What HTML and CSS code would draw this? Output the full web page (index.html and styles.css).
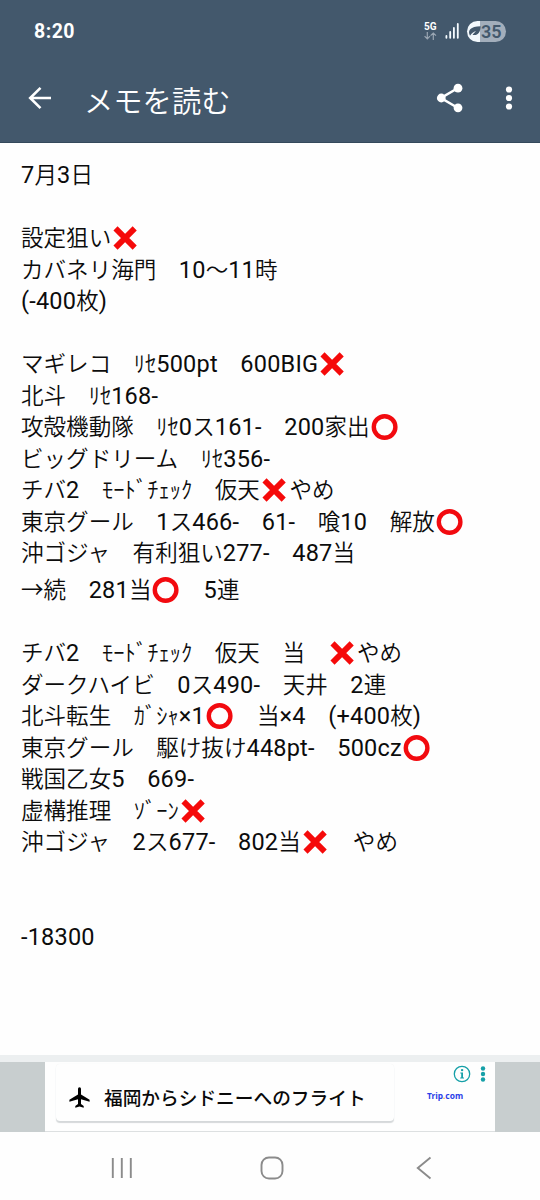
FILE: index.html
```html
<!DOCTYPE html>
<html lang="ja">
<head>
<meta charset="utf-8">
<title>メモを読む</title>
<link rel="stylesheet" href="styles.css">
</head>
<body>
<svg class="defs" width="0" height="0">
  <symbol id="cross" viewBox="0 0 28 26"><path d="M4.5 3.4 23.7 22.6M23.7 3.4 4.5 22.6" stroke="#f50a0a" stroke-width="5.8" fill="none"/></symbol>
  <symbol id="ring" viewBox="0 0 28 26"><circle cx="14.6" cy="13" r="10.8" stroke="#f20a0f" stroke-width="4.4" fill="none"/></symbol>
</svg>
<header class="top">
  <div class="status">
    <span class="clock">8:20</span>
    <div class="indicators">
      <div class="network"><span>5G</span>
        <svg width="13" height="8" viewBox="0 0 13 8"><path d="M3.3 0v6.8M.6 4.2l2.7 2.7L6 4.2M9.3 8V1M6.6 3.7 9.3 1 12 3.7" stroke="#9aa6b3" stroke-width="1.2" fill="none"/></svg>
      </div>
      <svg class="signal" width="15" height="16" viewBox="0 0 15 16"><path d="M1.4 13v1.8M5.2 9v5.8M8.9 5v9.8M12.8 1v13.8" stroke="#f5fbff" stroke-width="1.8" stroke-linecap="round"/></svg>
      <div class="battery">
        <svg width="13" height="12" viewBox="0 0 13 12"><path d="M1.5 9.6C0 5.5 2 1.5 12.6 1.2 12.5 7.5 9.5 11 4.5 9.8L8 6C5.5 7 3.8 8 2 10.8Z" fill="#43586c"/></svg><span>35</span>
      </div>
    </div>
  </div>
  <div class="appbar">
    <svg class="back" width="24" height="24" viewBox="0 0 24 24"><path d="M23 12H2.5M12.5 1.8 2.2 12l10.3 10.2" stroke="#fff" stroke-width="2.6" fill="none"/></svg>
    <h1>メモを読む</h1>
    <svg class="share" width="28" height="30" viewBox="0 0 28 30"><path d="M22 5 5 15l17 10" stroke="#fff" stroke-width="2.6" fill="none"/><g fill="#fff"><circle cx="22" cy="5.2" r="4.4"/><circle cx="5.3" cy="15" r="4.4"/><circle cx="22" cy="24.8" r="4.4"/></g></svg>
    <svg class="more" width="8" height="24" viewBox="0 0 8 24" fill="#fff"><circle cx="4" cy="3.5" r="3.1"/><circle cx="4" cy="12" r="3.1"/><circle cx="4" cy="20.5" r="3.1"/></svg>
  </div>
</header>
<main class="memo">
  <p><b>7</b>月<b>3</b>日</p>
  <p></p>
  <p>設定狙い<svg class="mark"><use href="#cross"/></svg></p>
  <p>カバネリ海門　<b>10</b>～<b>11</b>時</p>
  <p><b>(-400</b>枚<b>)</b></p>
  <p></p>
  <p>マギレコ　ﾘｾ<b>500pt</b>　<b>600BIG</b><svg class="mark"><use href="#cross"/></svg></p>
  <p>北斗　ﾘｾ<b>168-</b></p>
  <p>攻殻機動隊　ﾘｾ<b>0</b>ス<b>161-</b>　<b>200</b>家出<svg class="mark"><use href="#ring"/></svg></p>
  <p>ビッグドリーム　ﾘｾ<b>356-</b></p>
  <p>チバ<b>2</b>　ﾓｰﾄﾞﾁｪｯｸ　仮天<svg class="mark"><use href="#cross"/></svg>やめ</p>
  <p>東京グール　<b>1</b>ス<b>466-</b>　<b>61-</b>　喰<b>10</b>　解放<svg class="mark"><use href="#ring"/></svg></p>
  <p>沖ゴジャ　有利狙い<b>277-</b>　<b>487</b>当</p>
  <p class="tall">→続　<b>281</b>当<svg class="mark"><use href="#ring"/></svg>　<b>5</b>連</p>
  <p></p>
  <p>チバ<b>2</b>　ﾓｰﾄﾞﾁｪｯｸ　仮天　当　<svg class="mark"><use href="#cross"/></svg>やめ</p>
  <p>ダークハイビ　<b>0</b>ス<b>490-</b>　天井　<b>2</b>連</p>
  <p>北斗転生　ｶﾞｼｬ<b>×1</b><svg class="mark"><use href="#ring"/></svg>　当<b>×4</b>　<b>(+400</b>枚<b>)</b></p>
  <p>東京グール　駆け抜け<b>448pt-</b>　<b>500cz</b><svg class="mark"><use href="#ring"/></svg></p>
  <p>戦国乙女<b>5</b>　<b>669-</b></p>
  <p>虚構推理　ｿﾞｰﾝ<svg class="mark"><use href="#cross"/></svg></p>
  <p>沖ゴジャ　<b>2</b>ス<b>677-</b>　<b>802</b>当<svg class="mark"><use href="#cross"/></svg>　やめ</p>
  <p></p>
  <p></p>
  <p><b>-18300</b></p>
</main>
<aside class="adstrip">
  <div class="ad">
    <div class="card">
      <svg width="21" height="21" viewBox="0 0 21 21"><path d="M10.5.3c1 0 1.5.8 1.5 2v5.2l8.6 5.2v2L12 12.2v4.9l2.7 2v1.6l-4.2-1.2-4.2 1.2v-1.6l2.7-2v-4.9L.4 14.7v-2L9 7.5V2.3c0-1.2.5-2 1.5-2Z"/></svg>
      <span>福岡からシドニーへのフライト</span>
    </div>
    <div class="sponsor">
      <svg width="34" height="18" viewBox="0 0 34 18"><circle cx="9" cy="9" r="7.7" stroke="#16a0a8" stroke-width="1.3" fill="none"/><g fill="#16a0a8"><path d="M7.3 7.5h2.7v5H11v1H7.2v-1h1V8.5h-.9Z"/><circle cx="9.1" cy="5.1" r="1.2"/><circle cx="30" cy="3.5" r="2.2"/><circle cx="30" cy="9" r="2.2"/><circle cx="30" cy="14.5" r="2.2"/></g></svg>
      <span>Trip<i>.</i>com</span>
    </div>
  </div>
</aside>
<nav class="navbar">
  <svg width="22" height="22" viewBox="0 0 22 22"><path d="M1.8 1v20M10.8 1v20M19.8 1v20"/></svg>
  <svg class="home" width="24" height="24" viewBox="0 0 24 24"><rect x="1.5" y="1.5" width="21" height="21" rx="7.5"/></svg>
  <svg width="16" height="24" viewBox="0 0 16 24"><path d="M14.5 1.5 1.8 12l12.7 10.5"/></svg>
</nav>
</body>
</html>
```
FILE: styles.css
```css
* { box-sizing: border-box; }
body {
  margin: 0;
  width: 540px;
  height: 1200px;
  overflow: hidden;
  display: flex;
  flex-direction: column;
  background: #fefefe;
  color: #0c0c0c;
  font-family: "Noto Sans CJK JP", sans-serif;
}
svg { display: block; flex: none; }
.defs { position: absolute; }

.top {
  height: 143px;
  background: #43586c;
  border-bottom: 1px solid #34495b;
  color: #fff;
}
.status {
  height: 62px;
  padding: 0 34px 0 34px;
  display: flex;
  align-items: center;
  justify-content: space-between;
  font-family: Roboto, sans-serif;
}
.clock { font-size: 19.5px; font-weight: 700; letter-spacing: .5px; }
.indicators { display: flex; align-items: center; }
.network { width: 14px; margin-right: 7px; }
.network span { display: block; font-size: 10px; line-height: 9px; font-weight: 700; margin-bottom: 1px; }
.signal { margin-right: 7px; }
.battery {
  width: 39px;
  height: 21px;
  border-radius: 11px;
  padding-left: 1px;
  display: flex;
  align-items: center;
  background: linear-gradient(90deg, #f2f8fc 13px, #a3aebb 13px);
  color: #43586c;
  font-size: 18px;
  font-weight: 600;
  line-height: 21px;
}
.appbar { display: flex; align-items: center; height: 71px; padding: 0 27px 0 28px; }
.appbar h1 { margin: 2px 0 0 32px; font-size: 29.3px; line-height: 40px; font-weight: 350; flex: 1; }
.share { margin-right: 41px; }

.memo { flex: 1; padding: 15px 21px 0; font-size: 22.55px; font-weight: 350; }
.memo p { margin: 0; height: 31.5px; line-height: 31.5px; white-space: pre; }
.memo .tall { height: 37px; padding-top: 5.5px; }
.memo b { font: 400 23.5px/20px Roboto, sans-serif; letter-spacing: .2px; }
.mark { display: inline-block; width: 28px; height: 26px; margin-right: 1.5px; vertical-align: -5px; }

.adstrip { height: 77px; background: #c8cecf; border-top: 7px solid #eceff0; }
.ad {
  width: 450px;
  height: 70px;
  margin: 0 auto;
  padding-left: 11px;
  display: flex;
  background: #fefefe;
  border-bottom: 1px solid #dde0e1;
}
.card {
  width: 338px;
  height: 57px;
  margin-top: 2px;
  padding: 10px 0 0 13px;
  display: flex;
  align-items: center;
  gap: 14px;
  border-radius: 4px;
  box-shadow: 0 2px 1px #d5d8da, 0 0 1px #eceeef;
  color: #090909;
  font-size: 18.7px;
  font-weight: 500;
}
.card span { margin-top: -2px; }
.sponsor { margin: 3px 0 0 33px; color: #2b3fe8; font: 700 8.4px/14px "Noto Sans", sans-serif; }
.sponsor svg { margin-left: 26px; }
.sponsor span { display: block; margin-top: 6px; }
.sponsor i { color: #f0a030; font-style: normal; }

.navbar {
  height: 68px;
  padding: 4px 108px 0 111px;
  display: flex;
  align-items: center;
  justify-content: space-between;
}
.navbar svg { fill: none; stroke: #8b8b8b; stroke-width: 1.9; }
.navbar .home { margin-right: 5px; }
```
